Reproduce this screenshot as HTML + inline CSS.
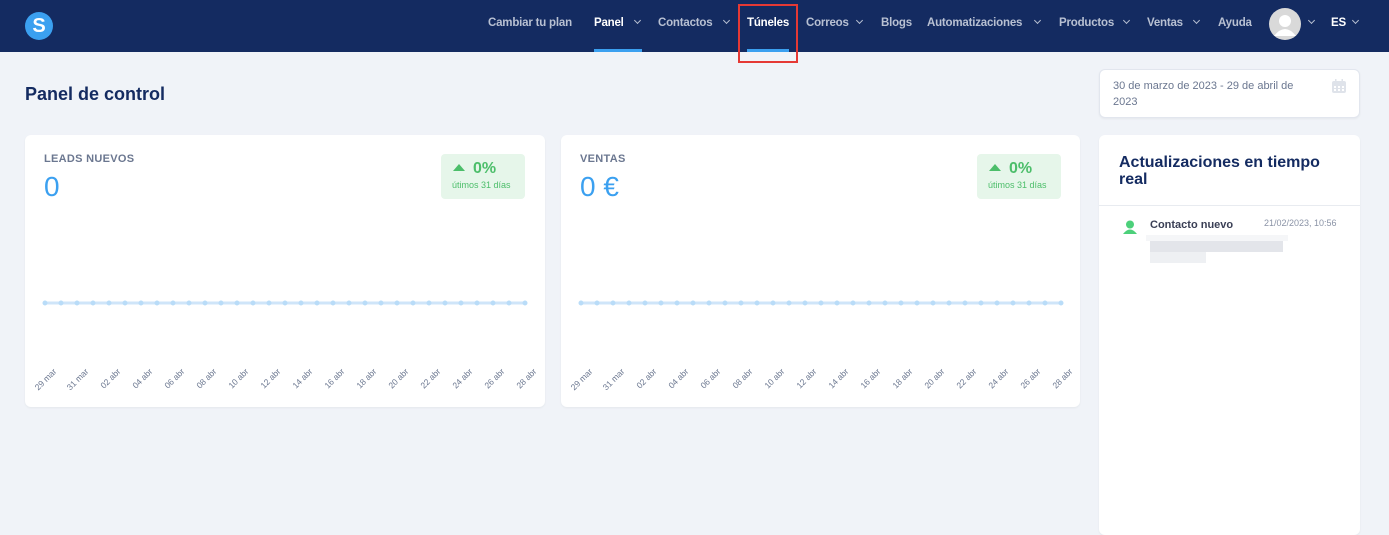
<!DOCTYPE html>
<html><head><meta charset="utf-8"><style>
*{box-sizing:border-box;margin:0;padding:0}
body{width:1389px;height:521px;overflow:hidden;background:#f0f3f8;font-family:"Liberation Sans",sans-serif;position:relative}
.nav{position:absolute;left:0;top:0;width:1389px;height:52px;background:#142b61}
.logo{position:absolute;left:25px;top:12px;width:28px;height:28px;border-radius:50%;background:#3ba0f0;color:#fff;font-weight:bold;font-size:20px;text-align:center;line-height:28px}
.ni{position:absolute;top:17px;font-size:11.5px;font-weight:bold;color:#b8c0d2;white-space:nowrap;letter-spacing:-.2px}
.ni.w{color:#fff}
.chev{position:absolute;top:18px;width:5px;height:5px;border-right:1.2px solid #b8c0d2;border-bottom:1.2px solid #b8c0d2;transform:rotate(45deg)}
.ul{position:absolute;top:49px;height:3px;background:#3ba0f0}
.red{position:absolute;left:738px;top:4px;width:60px;height:59px;border:2px solid #e53935}
.card{position:absolute;background:#fff;border-radius:6px;box-shadow:0 1px 2px rgba(0,0,0,.05)}
h1{position:absolute;left:25px;top:84px;font-size:18px;color:#142b61}
.lbl{position:absolute;left:19px;top:18px;font-size:11px;color:#6b7790;font-weight:bold;letter-spacing:.3px}
.big{position:absolute;left:19px;top:36px;font-size:28px;color:#3ba0f0}
.badge{position:absolute;top:19px;width:84px;height:45px;background:#e6f6ea;border-radius:4px;color:#4cbe6a}
.badge b{position:absolute;left:32px;top:6px;font-size:16px}
.badge i{position:absolute;left:12px;top:10px;border-left:6px solid transparent;border-right:6px solid transparent;border-bottom:7px solid #4cbe6a}
.badge s{position:absolute;left:11px;top:26px;font-size:9px;text-decoration:none}
</style></head><body>
<div class="nav">
<div class="logo">S</div>
<span class="ni" style="left:488px">Cambiar tu plan</span>
<span class="ni w" style="left:594px">Panel</span><span class="chev" style="left:635px"></span>
<span class="ni" style="left:658px">Contactos</span><span class="chev" style="left:724px"></span>
<span class="ni w" style="left:747px">Túneles</span>
<span class="ni" style="left:806px">Correos</span><span class="chev" style="left:857px"></span>
<span class="ni" style="left:881px">Blogs</span>
<span class="ni" style="left:927px">Automatizaciones</span><span class="chev" style="left:1035px"></span>
<span class="ni" style="left:1059px">Productos</span><span class="chev" style="left:1124px"></span>
<span class="ni" style="left:1147px">Ventas</span><span class="chev" style="left:1194px"></span>
<span class="ni" style="left:1218px">Ayuda</span>
<svg style="position:absolute;left:1269px;top:8px" width="32" height="32"><circle cx="16" cy="16" r="16" fill="#d9d9d9"/><circle cx="16" cy="13" r="6" fill="#fff"/><path d="M5 28 Q16 14 27 28 Z" fill="#fff"/></svg>
<span class="chev" style="left:1309px"></span>
<span class="ni w" style="left:1331px">ES</span><span class="chev" style="left:1353px"></span>
<div class="ul" style="left:594px;width:48px"></div>
<div class="ul" style="left:747px;width:42px"></div>
</div>
<div class="red"></div>
<h1>Panel de control</h1>

<div class="card" style="left:25px;top:135px;width:520px;height:272px">
<div class="lbl">LEADS NUEVOS</div><div class="big">0</div>
<div class="badge" style="left:416px"><i></i><b>0%</b><s>útimos 31 días</s></div>
</div>
<div class="card" style="left:561px;top:135px;width:519px;height:272px">
<div class="lbl">VENTAS</div><div class="big">0 €</div>
<div class="badge" style="left:416px"><i></i><b>0%</b><s>útimos 31 días</s></div>
</div>
<svg style="position:absolute;left:0;top:0" width="1100" height="410" font-family="Liberation Sans" font-size="8.5" fill="#6b7790">
<g stroke="#cfe5f9" stroke-width="3"><line x1="45" y1="303" x2="525" y2="303"/><line x1="581" y1="303" x2="1061" y2="303"/></g>
<g stroke="#b9dcf8" stroke-width="5" stroke-linecap="round" stroke-dasharray="0 16"><line x1="45" y1="303" x2="526" y2="303"/><line x1="581" y1="303" x2="1062" y2="303"/></g>
<g text-anchor="end">
<text transform="translate(57,372) rotate(-45)">29 mar</text><text transform="translate(89,372) rotate(-45)">31 mar</text><text transform="translate(121,372) rotate(-45)">02 abr</text><text transform="translate(153,372) rotate(-45)">04 abr</text><text transform="translate(185,372) rotate(-45)">06 abr</text><text transform="translate(217,372) rotate(-45)">08 abr</text><text transform="translate(249,372) rotate(-45)">10 abr</text><text transform="translate(281,372) rotate(-45)">12 abr</text><text transform="translate(313,372) rotate(-45)">14 abr</text><text transform="translate(345,372) rotate(-45)">16 abr</text><text transform="translate(377,372) rotate(-45)">18 abr</text><text transform="translate(409,372) rotate(-45)">20 abr</text><text transform="translate(441,372) rotate(-45)">22 abr</text><text transform="translate(473,372) rotate(-45)">24 abr</text><text transform="translate(505,372) rotate(-45)">26 abr</text><text transform="translate(537,372) rotate(-45)">28 abr</text>
<text transform="translate(593,372) rotate(-45)">29 mar</text><text transform="translate(625,372) rotate(-45)">31 mar</text><text transform="translate(657,372) rotate(-45)">02 abr</text><text transform="translate(689,372) rotate(-45)">04 abr</text><text transform="translate(721,372) rotate(-45)">06 abr</text><text transform="translate(753,372) rotate(-45)">08 abr</text><text transform="translate(785,372) rotate(-45)">10 abr</text><text transform="translate(817,372) rotate(-45)">12 abr</text><text transform="translate(849,372) rotate(-45)">14 abr</text><text transform="translate(881,372) rotate(-45)">16 abr</text><text transform="translate(913,372) rotate(-45)">18 abr</text><text transform="translate(945,372) rotate(-45)">20 abr</text><text transform="translate(977,372) rotate(-45)">22 abr</text><text transform="translate(1009,372) rotate(-45)">24 abr</text><text transform="translate(1041,372) rotate(-45)">26 abr</text><text transform="translate(1073,372) rotate(-45)">28 abr</text>
</g></svg>

<div class="card" style="left:1099px;top:69px;width:261px;height:49px;border:1px solid #e2e6ee">
<div style="position:absolute;left:13px;top:8px;width:200px;font-size:11px;line-height:16px;color:#6b7790">30 de marzo de 2023 - 29 de abril de 2023</div>
<svg style="position:absolute;left:231px;top:8px" width="16" height="16"><rect x="1" y="3" width="14" height="12" rx="2" fill="#dfe3ea"/><g fill="#fff"><rect x="3" y="8" width="2" height="2"/><rect x="7" y="8" width="2" height="2"/><rect x="11" y="8" width="2" height="2"/><rect x="3" y="11" width="2" height="2"/><rect x="7" y="11" width="2" height="2"/><rect x="11" y="11" width="2" height="2"/></g><rect x="4" y="1" width="1.5" height="4" fill="#dfe3ea"/><rect x="10.5" y="1" width="1.5" height="4" fill="#dfe3ea"/></svg>
</div>
<div class="card" style="left:1099px;top:135px;width:261px;height:400px">
<div style="position:absolute;left:20px;top:19px;width:220px;font-size:16px;font-weight:bold;color:#142b61;line-height:17px">Actualizaciones en tiempo real</div>
<div style="position:absolute;left:0;top:70px;width:261px;height:1px;background:#e8ebf0"></div>
<svg style="position:absolute;left:24px;top:85px" width="16" height="16"><circle cx="7" cy="4.5" r="4" fill="#4cd07a"/><path d="M0 14 Q7 5 14 14 Z" fill="#4cd07a"/></svg>
<div style="position:absolute;left:51px;top:84px;font-size:11px;font-weight:bold;color:#3a3f55">Contacto nuevo</div>
<div style="position:absolute;left:165px;top:83px;font-size:9px;color:#8a93a6">21/02/2023, 10:56</div>
<div style="position:absolute;left:51px;top:106px;width:133px;height:11px;background:#e3e5ea"></div>
<div style="position:absolute;left:51px;top:117px;width:56px;height:11px;background:#eef0f3"></div>
<div style="position:absolute;left:47px;top:100px;width:142px;height:6px;background:#f5f6f8"></div>
</div>
</body></html>
